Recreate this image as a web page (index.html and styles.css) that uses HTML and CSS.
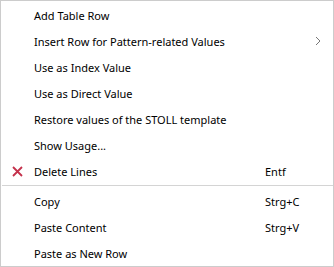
FILE: index.html
```html
<!DOCTYPE html>
<html>
<head>
<meta charset="utf-8">
<link rel="stylesheet" href="styles.css">
</head>
<body>
<div class="menu">
  <div class="group">
    <div class="item"><span class="icon"></span><span class="label">Add Table Row</span><span class="key"></span><span class="sub"></span></div>
    <div class="item"><span class="icon"></span><span class="label">Insert Row for Pattern-related Values</span><span class="key"></span><span class="sub"><svg width="6" height="10" viewBox="0 0 6 10"><path d="M1 1 L5 5 L1 9" fill="none" stroke="#777" stroke-width="1"/></svg></span></div>
    <div class="item"><span class="icon"></span><span class="label">Use as Index Value</span><span class="key"></span><span class="sub"></span></div>
    <div class="item"><span class="icon"></span><span class="label">Use as Direct Value</span><span class="key"></span><span class="sub"></span></div>
    <div class="item"><span class="icon"></span><span class="label">Restore values of the STOLL template</span><span class="key"></span><span class="sub"></span></div>
    <div class="item"><span class="icon"></span><span class="label">Show Usage...</span><span class="key"></span><span class="sub"></span></div>
    <div class="item"><span class="icon"><svg width="11" height="11" viewBox="0 0 11 11"><path d="M1 1 L10 10 M10 1 L1 10" stroke="#c4314b" stroke-width="1.8" fill="none"/></svg></span><span class="label">Delete Lines</span><span class="key">Entf</span><span class="sub"></span></div>
  </div>
  <div class="sep"></div>
  <div class="group">
    <div class="item"><span class="icon"></span><span class="label">Copy</span><span class="key">Strg+C</span><span class="sub"></span></div>
    <div class="item"><span class="icon"></span><span class="label">Paste Content</span><span class="key">Strg+V</span><span class="sub"></span></div>
    <div class="item"><span class="icon"></span><span class="label">Paste as New Row</span><span class="key"></span><span class="sub"></span></div>
  </div>
</div>
</body>
</html>
```

FILE: styles.css
```css
html, body {
  margin: 0;
  padding: 0;
  background: #ffffff;
}
.menu {
  width: 334px;
  height: 267px;
  box-sizing: border-box;
  border: 1px solid #cccccc;
  background: #ffffff;
  padding-top: 1px;
  font-family: "Noto Sans", "Open Sans", sans-serif;
  font-size: 11px;
  color: #000000;
}
.item {
  display: grid;
  grid-template-columns: 33px 1fr 46px 22px;
  height: 26px;
  align-items: center;
}
.icon {
  display: flex;
  align-items: center;
  padding-left: 11px;
}
.icon svg { display: block; }
.label {
  white-space: nowrap;
}
.key {
  white-space: nowrap;
}
.sub {
  display: flex;
  align-items: center;
  padding-left: 4px;
}
.sub svg { display: block; }
.sep {
  height: 4px;
  display: flex;
  align-items: flex-start;
  padding-top: 1px;
  box-sizing: border-box;
  padding-left: 1px;
}
.sep::before {
  content: "";
  display: block;
  height: 1px;
  flex: 1;
  background: #d4d4d4;
}
```
